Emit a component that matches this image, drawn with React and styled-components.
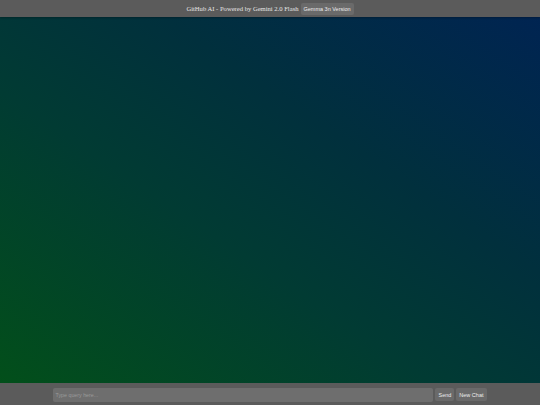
import React, { useState } from "react";
import styled, { createGlobalStyle } from "styled-components";

const GlobalStyle = createGlobalStyle`
  html, body, #root {
    margin: 0;
    padding: 0;
    height: 100%;
  }
  body {
    font-family: "Liberation Serif", serif;
    background: #5b5b5b;
  }
`;

const Page = styled.div`
  display: flex;
  flex-direction: column;
  height: 100vh;
`;

const Header = styled.header`
  height: 17px;
  background: #5b5b5b;
  display: flex;
  align-items: center;
  justify-content: center;
  gap: 2px;
  color: #e6e6e6;
  font-size: 6.6px;
  box-shadow: 0 1px 2px rgba(0, 0, 0, 0.25);
  z-index: 1;
`;

const Title = styled.span`
  font-family: "Liberation Serif", serif;
`;

const SmallButton = styled.button`
  font-family: "Liberation Sans", Arial, sans-serif;
  font-size: 5.5px;
  color: #ececec;
  background: #6a6a6a;
  border: none;
  border-radius: 2px;
  height: ${(p) => (p.$tall ? "13px" : "12px")};
  padding: 0 3px;
  cursor: pointer;
`;

const ChatArea = styled.main`
  flex: 1;
  background: linear-gradient(to top right, #024f1a 0%, #013b33 40%, #01303d 65%, #002452 100%);
`;

const Footer = styled.footer`
  height: 22px;
  background: #5b5b5b;
  display: flex;
  align-items: center;
  justify-content: center;
  gap: 2px;
  padding-top: 1px;
  box-sizing: border-box;
`;

const QueryInput = styled.input`
  width: 380px;
  height: 14px;
  box-sizing: border-box;
  background: #6e6e6e;
  border: none;
  border-radius: 2px;
  padding: 0 2px;
  font-family: "Liberation Sans", Arial, sans-serif;
  font-size: 5.3px;
  color: #eee;
  outline: none;
  &::placeholder {
    color: #9a9a9a;
  }
`;

export default function App() {
  const [query, setQuery] = useState("");
  return (
    <Page>
      <GlobalStyle />
      <Header>
        <Title>GitHub AI - Powered by Gemini 2.0 Flash</Title>
        <SmallButton>Gemma 3n Version</SmallButton>
      </Header>
      <ChatArea />
      <Footer>
        <QueryInput
          placeholder="Type query here..."
          value={query}
          onChange={(e) => setQuery(e.target.value)}
        />
        <SmallButton $tall>Send</SmallButton>
        <SmallButton $tall>New Chat</SmallButton>
      </Footer>
    </Page>
  );
}
